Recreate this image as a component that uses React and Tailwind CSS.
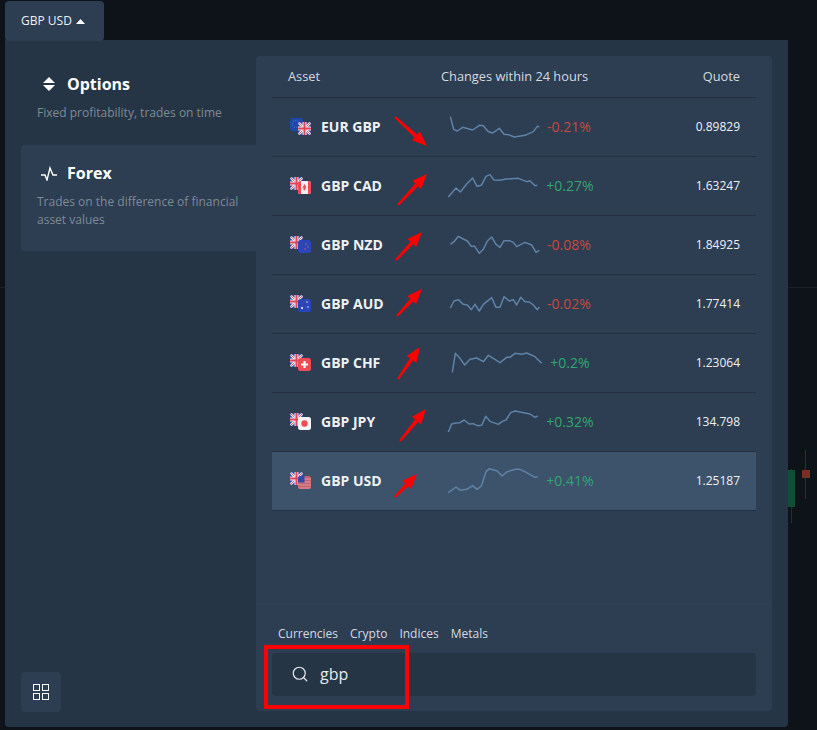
import { Search } from 'lucide-react';

const font = { fontFamily: '"Open Sans", sans-serif' };

// sparkline points were read off 3x crops, so each row keeps its own viewBox
const rows = [
  { name: 'EUR GBP', base: 'eu', quote: 'gb', change: '-0.21%', price: '0.89829', top: 114,
    line: '541,170 551,208 562,213 578,202 608,210 628,196 640,197 655,215 668,219 688,205 702,223 715,224 733,231 765,226 790,215 802,199 808,200' },
  { name: 'GBP CAD', base: 'gb', quote: 'ca', change: '+0.27%', price: '1.63247', top: 291,
    line: '535,411 558,384 571,396 590,372 608,354 621,379 634,376 648,349 660,344 672,360 690,361 708,357 745,355 770,365 780,362 795,377 802,376' },
  { name: 'GBP NZD', base: 'gb', quote: 'nz', change: '-0.08%', price: '1.84925', top: 3,
    line: '541,88 552,80 565,64 580,72 592,78 604,94 614,94 628,115 640,103 652,78 665,66 678,88 690,97 702,77 718,77 730,82 740,95 765,82 785,90 798,112 808,106' },
  { name: 'GBP AUD', base: 'gb', quote: 'au', change: '-0.02%', price: '1.77414', top: 180,
    line: '541,279 552,258 565,254 580,268 592,270 604,284 615,268 628,288 640,268 665,248 678,277 690,277 702,245 718,258 730,254 740,270 752,247 765,260 778,261 790,270 802,284 808,276' },
  { name: 'GBP CHF', base: 'gb', quote: 'ch', change: '+0.2%', price: '1.23064', top: 357,
    line: '547,472 556,415 570,430 584,450 600,433 620,429 640,440 655,421 670,430 690,443 710,427 720,427 735,415 755,418 770,414 795,425 815,445' },
  { name: 'GBP JPY', base: 'gb', quote: 'jp', change: '+0.32%', price: '134.798', top: 69,
    line: '535,186 545,162 558,159 570,158 583,150 597,162 610,161 622,167 635,166 647,139 660,154 685,163 697,154 708,150 722,128 735,123 780,132 795,142 803,138' },
  { name: 'GBP USD', base: 'gb', quote: 'us', change: '+0.41%', price: '1.25187', top: 246, active: true,
    line: '535,368 558,351 571,361 590,358 608,347 621,358 634,348 648,305 658,296 682,303 696,318 710,306 735,298 750,298 770,308 795,322 803,320' },
];

// page coordinates of the hand-drawn red markers
const arrows = [
  [395, 117, 427, 146], [398, 205, 427, 174], [396, 260, 422, 232], [397, 316, 422, 289],
  [398, 379, 420, 347], [400, 441, 426, 409], [395, 497, 417, 474],
];

function Flag({ code, x, y }) {
  const clip = `flag-${code}-${x}`;
  return (
    <g>
      <clipPath id={clip}><rect x={x} y={y} width="13" height="13" rx="2.5" /></clipPath>
      <g clipPath={`url(#${clip})`}>
        {code === 'gb' && (
          <>
            <rect x={x} y={y} width="13" height="13" fill="#3348a8" />
            <path d={`M${x} ${y}l13 13M${x + 13} ${y}l-13 13`} stroke="#f4e8ea" strokeWidth="2.4" />
            <path d={`M${x} ${y}l13 13M${x + 13} ${y}l-13 13`} stroke="#e0455a" strokeWidth="0.8" />
            <path d={`M${x + 6.5} ${y}v13M${x} ${y + 6.5}h13`} stroke="#f4e8ea" strokeWidth="4" />
            <path d={`M${x + 6.5} ${y}v13M${x} ${y + 6.5}h13`} stroke="#e0455a" strokeWidth="2" />
          </>
        )}
        {code === 'eu' && (
          <>
            <rect x={x} y={y} width="13" height="13" fill="#1d49a8" />
            <circle cx={x + 6} cy={y + 6} r="3.6" fill="none" stroke="#4f7ac0" strokeWidth="1" strokeDasharray="1.2 1" />
          </>
        )}
        {code === 'ca' && (
          <>
            <rect x={x} y={y} width="13" height="13" fill="#f5eeee" />
            <rect x={x} y={y} width="3" height="13" fill="#ef4a55" />
            <rect x={x + 10} y={y} width="3" height="13" fill="#ef4a55" />
            <path d={`M${x + 6.5} ${y + 3}l2 3.5-1 .2v2.6h-2v-2.6l-1-.2z`} fill="#ef4a55" />
          </>
        )}
        {code === 'nz' && (
          <>
            <rect x={x} y={y} width="13" height="13" fill="#2b46b8" />
            <circle cx={x + 8} cy={y + 4} r=".7" fill="#e0606a" />
            <circle cx={x + 10} cy={y + 7} r=".7" fill="#e0606a" />
            <circle cx={x + 7} cy={y + 9} r=".7" fill="#e0606a" />
          </>
        )}
        {code === 'au' && (
          <>
            <rect x={x} y={y} width="13" height="13" fill="#2b46b8" />
            <circle cx={x + 4} cy={y + 9} r="1" fill="#fff" />
            <circle cx={x + 9} cy={y + 3} r=".7" fill="#fff" />
            <circle cx={x + 10} cy={y + 8} r=".7" fill="#fff" />
          </>
        )}
        {code === 'ch' && (
          <>
            <rect x={x} y={y} width="13" height="13" fill="#f04b55" />
            <path d={`M${x + 6.5} ${y + 3}v7M${x + 3} ${y + 6.5}h7`} stroke="#fff" strokeWidth="2.2" />
          </>
        )}
        {code === 'jp' && (
          <>
            <rect x={x} y={y} width="13" height="13" fill="#f5f5f5" />
            <circle cx={x + 6.5} cy={y + 6.5} r="3.2" fill="#ef4a55" />
          </>
        )}
        {code === 'us' && (
          <>
            <rect x={x} y={y} width="13" height="13" fill="#c9606e" />
            <path d={`M${x} ${y + 3}h13M${x} ${y + 6}h13M${x} ${y + 9}h13M${x} ${y + 12}h13`} stroke="#d99aa2" strokeWidth="1" />
            <rect x={x} y={y} width="6.5" height="6.5" fill="#3348a8" />
          </>
        )}
      </g>
    </g>
  );
}

function PairFlags({ base, quote }) {
  return (
    <svg width="21" height="17" viewBox="0 0 21 17" className="shrink-0">
      <Flag code={base} x={0} y={0} />
      <Flag code={quote} x={8} y={4} />
    </svg>
  );
}

function Row({ row }) {
  const up = row.change[0] === '+';
  return (
    <div className={`h-[59px] flex items-center pl-[18px] pr-4 border-b border-[#233040] ${row.active ? 'bg-[#3d526b]' : ''}`}>
      <div className="w-[150px] flex items-center gap-[10px] -mt-[2px]">
        <PairFlags base={row.base} quote={row.quote} />
        <span className="text-[14px] font-bold text-[#eef1f4]">{row.name}</span>
      </div>
      <svg width="105" height="59" viewBox={`510 ${row.top} 315 177`} className="shrink-0">
        <polyline points={row.line} fill="none" stroke="#5f83a8" strokeWidth="4.5" strokeLinejoin="round" />
      </svg>
      <span className={`w-[60px] -ml-[6px] pb-[2px] text-center text-[14px] ${up ? 'pl-[2px] text-[#2fa86f]' : 'text-[#c9483f]'}`}>{row.change}</span>
      <span className="ml-auto text-[12px] font-medium text-[#eef1f4]">{row.price}</span>
    </div>
  );
}

function Arrow({ from }) {
  const [x1, y1, x2, y2] = from;
  const len = Math.hypot(x2 - x1, y2 - y1);
  const ux = (x2 - x1) / len;
  const uy = (y2 - y1) / len;
  const bx = x2 - ux * 15;
  const by = y2 - uy * 15;
  return (
    <g fill="#ff0000">
      <polygon points={`${x1 - uy},${y1 + ux} ${x1 + uy},${y1 - ux} ${bx + uy * 2},${by - ux * 2} ${bx - uy * 2},${by + ux * 2}`} />
      <polygon points={`${x2},${y2} ${bx - uy * 6},${by + ux * 6} ${bx + uy * 6},${by - ux * 6}`} />
    </g>
  );
}

export default function App() {
  return (
    <div className="relative w-[817px] h-[730px] overflow-hidden bg-[#0d1319] pt-px" style={font}>
      {/* chart behind the dropdown */}
      <div className="absolute left-0 right-0 top-[287px] h-px bg-[#1a2128]" />
      <div className="absolute left-[791px] top-[469px] w-px h-[54px] bg-[#123a2a]" />
      <div className="absolute left-[788px] top-[470px] w-[7px] h-[37px] bg-[#114f35]" />
      <div className="absolute left-[805px] top-[450px] w-px h-[49px] bg-[#4a2420]" />
      <div className="absolute left-[802px] top-[470px] w-[8px] h-[8px] bg-[#7a3020]" />

      <button className="relative z-10 ml-[5px] w-[99px] h-10 rounded bg-[#2d3d52] flex items-center pl-4 gap-[4px] text-[12px] text-[#eef1f4]">
        GBP USD
        <svg width="9" height="5" viewBox="0 0 9 5"><path d="M4.5 0L9 5H0z" fill="#fff" /></svg>
      </button>

      <div className="relative ml-[5px] -mt-px w-[783px] h-[687px] flex bg-[#263545] rounded-b">
        <aside className="w-[251px] shrink-0 flex flex-col pl-4 pt-4 pb-[15px]">
          <div className="h-[89px] pl-4 pt-4">
            <div className="flex items-center gap-[6px] h-6">
              <svg width="24" height="16" viewBox="0 0 24 16">
                <path d="M12 1l6 6H6zM12 15l-6-6h12z" fill="#fff" />
              </svg>
              <span className="text-[16px] font-bold text-white">Options</span>
            </div>
            <p className="mt-[8px] text-[12px] leading-[18px] text-[#7e8a96]">Fixed profitability, trades on time</p>
          </div>
          <div className="h-[106px] pl-4 pr-2 pt-4 bg-[#2d3d52] rounded-l">
            <div className="flex items-center gap-[6px] h-6">
              <svg width="24" height="16" viewBox="0 0 24 16">
                <path d="M4 10h4l2 5 3-12 3 7h4" fill="none" stroke="#fff" strokeWidth="1.4" />
              </svg>
              <span className="text-[16px] font-bold text-white">Forex</span>
            </div>
            <p className="mt-[8px] text-[12px] leading-[18px] text-[#7e8a96]">Trades on the difference of financial asset values</p>
          </div>
          <button className="mt-auto w-10 h-10 rounded bg-[#2d3d52] flex items-center justify-center">
            <svg width="16" height="16" viewBox="0 0 16 16" fill="none" stroke="#fff" strokeWidth="1">
              <rect x=".5" y=".5" width="6" height="6" />
              <rect x="9.5" y=".5" width="6" height="6" />
              <rect x=".5" y="9.5" width="6" height="6" />
              <rect x="9.5" y="9.5" width="6" height="6" />
            </svg>
          </button>
        </aside>

        <section className="mt-4 mb-4 w-[516px] flex flex-col bg-[#2d3d52] rounded">
          <div className="flex-1 px-4">
            <div className="h-[42px] flex items-center pl-4 pr-4 border-b border-[#233040] text-[12.8px] text-[#d5dae0]">
              <span className="w-[153px]">Asset</span>
              <span>Changes within 24 hours</span>
              <span className="ml-auto">Quote</span>
            </div>
            {rows.map((row) => <Row key={row.name} row={row} />)}
          </div>
          <div className="h-[107px] px-4 border-t border-[#303f55]">
            <div className="h-[41px] flex items-end pb-[3px] pl-[6px] gap-3 text-[12px] text-[#d5dae0]">
              <span>Currencies</span>
              <span>Crypto</span>
              <span>Indices</span>
              <span>Metals</span>
            </div>
            <div className="h-[43px] mt-[7px] rounded bg-[#263545] flex items-center pl-[19px] gap-[11px] pb-px text-[16px] text-[#e6eaee]">
              <Search size={18} strokeWidth={1.6} />
              gbp
            </div>
          </div>
        </section>
      </div>

      {/* red markers drawn on top of the screenshot */}
      <svg width="817" height="730" className="absolute inset-0 z-20 pointer-events-none">
        {arrows.map((a) => <Arrow key={a[1]} from={a} />)}
      </svg>
      <div className="absolute z-20 left-[264px] top-[645px] w-[145px] h-[64px] border-4 border-[#ff0000]" />
    </div>
  );
}
